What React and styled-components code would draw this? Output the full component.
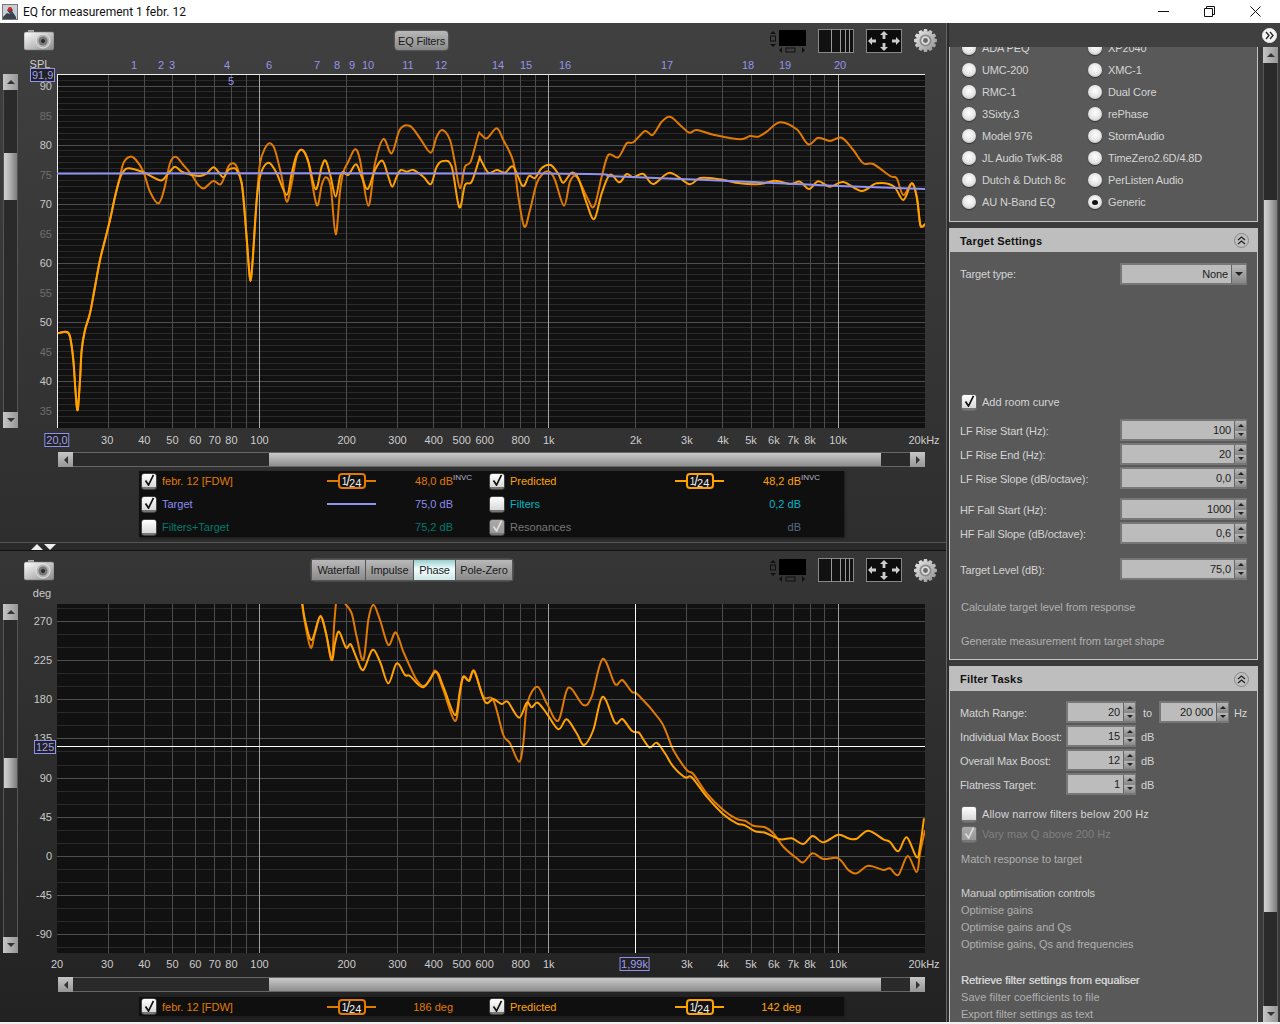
import React from 'react';
import styled, { createGlobalStyle } from 'styled-components';

const Global = createGlobalStyle`
  html, body { margin: 0; padding: 0; background: #fff; overflow: hidden; }
  #root { width: 1280px; height: 1024px; overflow: hidden; }
  * { box-sizing: border-box; }
`;

const FONT = '"Liberation Sans", Arial, sans-serif';
const fx = (f) => 57.3 + 289.3 * Math.log10(f / 20);

/* ---------- data ---------- */
const z = (ox, oy, pts) => pts.map(([x, y]) => [ox + x / 3, oy + y / 3]);
const lowCommon = [[-6,640],[0,638],[20,636],[30,650],[40,720],[47,820],[53,870],[60,780],[65,690],[75,630],[90,580],[105,500],[120,420],[135,360],[150,300],[165,230],[178,180]];
const spl1 = [
  ...z(60,120,lowCommon),
  ...z(60,120,[[190,130],[210,110],[228,120],[250,155],[270,215],[295,250],[312,210],[330,130],[347,110],[370,135],[395,165],[415,195],[432,205],[460,183],[483,192],[505,140],[518,130],[530,140],[545,190],[555,290],[565,420],[571,483],[578,420],[590,240],[600,130],[615,85],[630,70],[645,90],[665,170],[680,245],[695,190],[710,110],[727,90],[745,125],[770,255],[785,195],[797,172],[812,200],[827,343],[840,215],[850,157],[865,125],[885,88],[900,120],[925,257],[945,130],[970,57],[995,100],[1020,28],[1050,18],[1080,55],[1112,98],[1130,50],[1147,30],[1170,60],[1185,130],[1200,205],[1215,140],[1232,125],[1255,45]]),
  ...z(480,100,[[0,100],[20,115],[50,85],[70,120],[100,185],[115,290],[133,380],[150,330],[170,250],[190,220],[208,215],[225,240],[252,317],[270,245],[290,230],[320,290],[342,320],[365,230],[385,165],[415,172],[440,130],[460,127],[495,93],[518,105],[545,65],[570,50],[600,75],[628,98],[650,90],[700,104],[780,118],[810,108],[835,110],[860,95],[900,67],[950,88],[985,133],[1015,113],[1050,123],[1085,113],[1120,150],[1150,190],[1180,192],[1230,228],[1250,235],[1270,285],[1295,250],[1310,290],[1320,370],[1327,380],[1335,372]]),
];
const spl2 = [
  ...z(60,120,lowCommon),
  ...z(60,120,[[190,155],[205,145],[250,157],[280,172],[305,181],[325,160],[345,140],[365,155],[395,165],[420,168],[440,160],[460,142],[475,155],[490,172],[505,150],[520,145],[530,150],[545,190],[555,290],[565,420],[571,483],[578,420],[590,240],[600,170],[615,135],[630,130],[650,160],[680,225],[695,160],[710,105],[727,90],[745,125],[767,208],[785,140],[797,122],[812,170],[827,230],[840,170],[850,155],[865,165],[888,133],[905,170],[923,207],[945,150],[967,122],[985,170],[997,200],[1010,170],[1022,150],[1040,155],[1060,150],[1090,170],[1113,192],[1130,140],[1150,123],[1175,140],[1198,262],[1215,195],[1235,185],[1258,117]]),
  ...z(480,100,[[0,175],[25,218],[50,210],[75,218],[100,200],[128,258],[147,228],[165,234],[185,204],[212,195],[235,222],[250,248],[275,218],[295,235],[320,310],[343,357],[365,280],[390,224],[418,247],[440,222],[460,232],[490,222],[520,252],[570,218],[628,253],[660,234],[720,238],[780,250],[840,252],[885,242],[930,252],[960,245],[987,267],[1015,244],[1050,260],[1090,246],[1145,273],[1190,250],[1240,258],[1270,300],[1295,250],[1310,290],[1320,370],[1327,380],[1335,372]]),
];
const target = [[57,173.5],[549,173.5],...z(480,100,[[400,229],[600,237],[800,245],[1075,258],[1335,267]])];
const ph1a = z(290,600,[[30,-20],[35,0],[45,70],[62,143],[75,100],[92,47],[108,100],[125,180],[132,80],[138,10],[145,-30]]);
const ph1b = [
  ...z(290,600,[[155,-10],[165,10],[185,40],[200,110],[220,180],[235,60],[250,14],[270,60],[295,135],[317,97],[340,155],[360,200],[380,240],[400,258],[420,240],[437,212],[460,270],[495,363],[510,280],[520,230],[537,240],[553,212],[580,290],[610,300],[640,405],[660,430],[687,485],[700,430],[712,310],[742,260],[770,310],[805,362],[835,263],[880,315],[905,290],[938,177],[975,252],[997,240],[1025,275],[1045,285]]),
  ...z(640,720,[[60,0],[80,40],[100,90],[140,150],[160,162],[200,220],[250,270],[290,297],[315,302],[340,317],[375,322],[400,340],[430,380],[470,415],[490,427],[518,400],[550,417],[595,415],[625,450],[650,460],[685,437],[730,450],[750,445],[775,465],[803,408],[830,456],[840,400],[855,330]]),
];
const ph2 = [
  ...z(290,600,[[30,-20],[35,0],[45,60],[65,120],[90,50],[108,100],[125,180],[135,130],[147,95],[168,143],[182,133],[200,175],[220,210],[247,150],[270,185],[295,250],[320,190],[345,225],[360,228],[400,262],[437,215],[460,260],[495,345],[510,270],[520,230],[537,243],[553,215],[585,305],[610,297],[635,312],[653,305],[687,353],[710,308],[725,322],[743,308],[770,340],[805,388],[830,358],[860,400],[882,435],[910,390],[938,290],[975,368],[997,357],[1025,392],[1045,397]]),
  ...z(640,720,[[0,42],[28,82],[50,68],[75,100],[100,140],[135,172],[155,172],[200,230],[250,283],[290,310],[315,316],[345,334],[375,338],[420,358],[455,355],[490,372],[518,348],[550,367],[595,344],[625,355],[650,356],[685,332],[730,358],[750,366],[775,394],[800,352],[830,412],[840,380],[852,295]]),
].sort((a, b) => a[0] - b[0]);

const spline = (p) => {
  let d = `M${p[0][0].toFixed(1)} ${p[0][1].toFixed(1)}`;
  for (let i = 0; i < p.length - 1; i++) {
    const a = p[Math.max(i - 1, 0)], b = p[i], c = p[i + 1], e = p[Math.min(i + 2, p.length - 1)];
    const c1 = [b[0] + (c[0] - a[0]) / 6, b[1] + (c[1] - a[1]) / 6];
    const c2 = [c[0] - (e[0] - b[0]) / 6, c[1] - (e[1] - b[1]) / 6];
    d += `C${c1[0].toFixed(1)} ${c1[1].toFixed(1)} ${c2[0].toFixed(1)} ${c2[1].toFixed(1)} ${c[0].toFixed(1)} ${c[1].toFixed(1)}`;
  }
  return d;
};

const gridFreqs = [];
[10, 100, 1000, 10000].forEach((m) => [1,2,3,4,5,6,7,8,9].forEach((k) => { const f = k * m; if (f > 20 && f <= 20000) gridFreqs.push(f); }));
const isDecade = (f) => f === 100 || f === 1000 || f === 10000;

const xLabels = [[30,'30'],[40,'40'],[50,'50'],[60,'60'],[70,'70'],[80,'80'],[100,'100'],[200,'200'],[300,'300'],[400,'400'],[500,'500'],[600,'600'],[800,'800'],[1000,'1k'],[2000,'2k'],[3000,'3k'],[4000,'4k'],[5000,'5k'],[6000,'6k'],[7000,'7k'],[8000,'8k'],[10000,'10k']];
const filterNums = [['1',134],['2',161],['3',172],['4',227],['6',269],['7',317],['8',337],['9',352],['10',368],['11',408],['12',441],['14',498],['15',526],['16',565],['17',667],['18',748],['19',785],['20',840]];

/* ---------- shell ---------- */
const Page = styled.div`
  width: 1280px; height: 1024px; display: flex; flex-direction: column;
  font-family: ${FONT}; font-size: 11px; color: #ccc; background: #fff;
`;
const TitleBar = styled.div`
  height: 23px; flex: none; background: #fff; display: flex; align-items: center; padding: 0 2px;
`;
const TitleText = styled.div`
  font-family: Roboto, "Open Sans", sans-serif; font-size: 12px; color: #111; margin-left: 5px; flex: 1;
`;
const WinBtn = styled.div`
  width: 46px; height: 23px; display: flex; align-items: center; justify-content: center;
`;
const Main = styled.div`
  flex: none; height: 999px; display: flex; background: #333;
`;
const LeftPane = styled.div`
  width: 946px; flex: none; display: flex; flex-direction: column;
`;
const ChartPanel = styled.div`
  height: ${(p) => p.$h}px; flex: none; display: flex; flex-direction: column;
  background: linear-gradient(${(p) => p.$from}, ${(p) => p.$to});
`;
const Splitter = styled.div`
  height: 9px; flex: none; background: #2a2a2a; border-top: 1px solid #555; border-bottom: 1px solid #111;
  display: flex; align-items: center; padding-left: 31px; gap: 1px;
`;
const Tri = styled.div`
  width: 0; height: 0; border-left: 6px solid transparent; border-right: 6px solid transparent;
  ${(p) => (p.$up ? 'border-bottom: 6px solid #eee;' : 'border-top: 6px solid #eee;')}
`;
const BottomEdge = styled.div`
  height: 2px; flex: none; background: #f0f0f0;
`;

/* ---------- toolbar ---------- */
const Toolbar = styled.div`
  height: ${(p) => p.$h}px; flex: none; display: flex; align-items: center; padding: 0 9px 0 24px;
`;
const CenterTools = styled.div`
  margin-left: ${(p) => p.$left}px; display: flex;
`;
const ToolBtn = styled.div`
  width: 55px; height: 21px; border-radius: 4px; border: 1px solid #555; letter-spacing: -.2px;
  background: linear-gradient(#b8b8b8, #8a8a8a); color: #1a1a1a; font-size: 11px;
  display: flex; align-items: center; justify-content: center; box-shadow: 0 0 0 1px #444;
`;
const TabGroup = styled.div`
  display: flex; height: 22px; border-radius: 4px; box-shadow: 0 0 0 1px #4a4a4a; letter-spacing: -.1px;
`;
const Tab = styled.div`
  width: ${(p) => p.$w}px; display: flex; align-items: center; justify-content: center; font-size: 11px;
  color: #1a1a1a; border: 1px solid #555; border-left-width: ${(p) => (p.$first ? 1 : 0)}px;
  background: ${(p) => (p.$active ? 'linear-gradient(#9cc, #f2ffff 45%, #cfe6e6)' : 'linear-gradient(#b8b8b8, #8a8a8a)')};
`;
const RightTools = styled.div`
  margin-left: auto; display: flex; align-items: center; gap: 12px;
`;

/* ---------- strips, plot ---------- */
const Strip = styled.div`
  height: ${(p) => p.$h}px; flex: none; position: relative;
`;
const Mark = styled.span`
  position: absolute; top: ${(p) => p.$top}px; transform: translateX(-50%);
  font-size: 11px; line-height: 13px; color: ${(p) => p.$color || '#ccc'}; white-space: nowrap;
`;
const ValueBox = styled.span`
  position: absolute; top: ${(p) => p.$top}px; height: 14px; padding: 0 1px; z-index: 3;
  border: 1px solid #9090f0; background: #222; color: #a0a0f0; font-size: 11px; line-height: 12px;
  white-space: nowrap; transform: translateX(${(p) => (p.$center ? '-50%' : '0')});
`;
const PlotRow = styled.div`
  height: ${(p) => p.$h}px; flex: none; display: flex; padding-left: 3px;
`;
const VScroll = styled.div`
  width: 15px; flex: none; display: flex; flex-direction: column;
`;
const VSeg = styled.div`
  ${(p) => (p.$h ? `height: ${p.$h}px; flex: none;` : 'flex: 1;')}
  background: ${(p) => (p.$thumb ? 'linear-gradient(90deg, #d0d0d0, #c0c0c0 30%, #7c7c7c)' : '#2a2a2a')};
  border-left: 1px solid #555; border-right: 1px solid #555;
`;
const SArrow = styled.div`
  flex: none; background: linear-gradient(${(p) => (p.$h ? '#c6c6c6, #969696' : '90deg, #c6c6c6, #969696')});
  ${(p) => (p.$h ? 'width: 15px; height: 15px;' : 'width: 15px; height: 16px;')}
  display: flex; align-items: center; justify-content: center;
`;
const Caret = styled.div`
  width: 0; height: 0;
  ${(p) => p.$dir === 'up' && 'border-left: 4px solid transparent; border-right: 4px solid transparent; border-bottom: 4px solid #333;'}
  ${(p) => p.$dir === 'down' && 'border-left: 4px solid transparent; border-right: 4px solid transparent; border-top: 4px solid #333;'}
  ${(p) => p.$dir === 'left' && 'border-top: 4px solid transparent; border-bottom: 4px solid transparent; border-right: 4px solid #333;'}
  ${(p) => p.$dir === 'right' && 'border-top: 4px solid transparent; border-bottom: 4px solid transparent; border-left: 4px solid #333;'}
`;
const YAxis = styled.div`
  width: 39px; flex: none; position: relative;
`;
const YLabel = styled.span`
  position: absolute; right: 5px; transform: translateY(-50%); font-size: 11px; line-height: 13px;
  color: ${(p) => (p.$dim ? '#6e6e6e' : '#c8c8c8')};
`;
const PlotSvg = styled.svg`
  display: block; flex: none; background: #111;
`;
const HScrollRow = styled.div`
  height: 15px; flex: none; margin: ${(p) => p.$top}px 0 0 58px; width: 867px; display: flex;
`;
const HSeg = styled.div`
  ${(p) => (p.$w ? `width: ${p.$w}px; flex: none;` : 'flex: 1;')}
  background: ${(p) => (p.$thumb ? 'linear-gradient(#cacaca, #8e8e8e)' : '#2a2a2a')};
  border-top: 1px solid #666; border-bottom: 1px solid #666;
`;

/* ---------- legend ---------- */
const Legend = styled.div`
  margin: ${(p) => p.$top}px 0 0 139px; width: 705px; background: #0f0f0f; padding-left: 3px; flex: none;
  display: grid; grid-template-rows: ${(p) => p.$rows}; align-items: center;
  grid-template-columns: 20px 165px 49px 77px 37px 20px 165px 49px 77px 1fr;
  box-shadow: 1px 1px 2px #1a1a1a;
`;
const CheckBox = styled.div`
  width: 14px; height: 15px; border-radius: 2px; flex: none; display: flex; align-items: center; justify-content: center;
  background: ${(p) => (p.$off ? 'linear-gradient(#aaa, #999)' : 'linear-gradient(#fff, #d8d8d8)')};
  border-bottom: 2px solid #777;
  box-shadow: 0 0 0 .5px #777;
`;
const LegendLabel = styled.div`
  color: ${(p) => p.$c}; font-size: 11px; white-space: nowrap;
`;
const LegendValue = styled.div`
  color: ${(p) => p.$c}; font-size: 11px; text-align: right; white-space: nowrap;
`;
const Sup = styled.div`
  color: #b4b4cc; font-size: 8px; align-self: start; margin-top: 2px; white-space: nowrap;
`;
const LineSample = styled.div`
  height: 2px; background: ${(p) => p.$c};
`;
const RatioWrap = styled.div`
  position: relative; height: 16px; display: flex; align-items: center; justify-content: center;
  &::before { content: ''; position: absolute; left: 0; right: 0; top: 7px; height: 2px; background: ${(p) => p.$c}; }
`;
const RatioBox = styled.div`
  position: relative; width: 28px; height: 16px; border: 2px solid ${(p) => p.$c}; border-radius: 4px; background: #111;
  color: #eee; display: flex; align-items: baseline; justify-content: center; line-height: 12px; overflow: hidden;
`;
const RatioNum = styled.span`
  font-size: ${(p) => p.$s}px; position: relative; top: ${(p) => p.$top}px;
`;
const RatioSlash = styled.span`
  font-size: 14px; font-weight: 300; margin: 0 -1px;
`;

/* ---------- right pane ---------- */
const Divider = styled.div`
  width: 3px; flex: none; background: #2c2c2c; border-left: 1px solid #666;
`;
const RightPane = styled.div`
  flex: 1; display: flex; flex-direction: column; background: #3a3a3a; letter-spacing: -.12px;
`;
const RightTop = styled.div`
  height: 24px; flex: none; background: #404040; display: flex; align-items: center; justify-content: flex-end; padding-right: 3px;
`;
const RoundBtn = styled.div`
  width: 15px; height: 15px; border-radius: 50%; display: flex; align-items: center; justify-content: center;
  background: ${(p) => (p.$light ? '#f4f4f4' : 'transparent')}; border: 1px solid ${(p) => (p.$light ? '#eee' : '#888')};
`;
const RightBody = styled.div`
  flex: 1; display: flex; min-height: 0;
`;
const Column = styled.div`
  width: 309px; flex: none; display: flex; flex-direction: column;
`;
const RadioPanel = styled.div`
  height: 175px; flex: none; overflow: hidden; background: #595959; border: 1px solid #c4c4c4; border-top: 0;
`;
const RadioGrid = styled.div`
  margin-top: -10px; padding-left: 12px; display: grid; grid-template-columns: 126px 1fr; grid-auto-rows: 22px;
`;
const RadioItem = styled.div`
  display: flex; align-items: center; gap: 6px; color: #d4d4d4; font-size: 11px; white-space: nowrap;
`;
const RadioDot = styled.div`
  width: 14px; height: 14px; border-radius: 50%; flex: none; display: flex; align-items: center; justify-content: center;
  background: radial-gradient(circle at 50% 40%, #fff, #e4e4e4 55%, #aaa);
  box-shadow: 0 1px 1px #333;
  &::after { content: ''; width: 6px; height: 5px; border-radius: 50%; background: ${(p) => (p.$on ? '#111' : 'transparent')}; }
`;
const SectionHead = styled.div`
  height: ${(p) => p.$h}px; margin-top: 6px; flex: none; background: #bebebe; color: #111; font-weight: bold; font-size: 11px;
  display: flex; align-items: center; justify-content: space-between; padding: 1px 9px 0 11px; letter-spacing: .2px;
`;
const SectionBody = styled.div`
  flex: ${(p) => (p.$h ? 'none' : '1')}; ${(p) => p.$h && `height: ${p.$h}px;`}
  background: #595959; border: 1px solid #c4c4c4; border-top: 0; ${(p) => !p.$h && 'border-bottom: 0;'}
  padding: ${(p) => p.$top}px 0 0 10px; overflow: hidden;
`;
const Row = styled.div`
  height: ${(p) => p.$h || 24}px; margin-top: ${(p) => p.$mt || 0}px; display: flex; align-items: flex-start;
`;
const RowLabel = styled.div`
  width: ${(p) => p.$w}px; flex: none; color: #d4d4d4; font-size: 11px; line-height: ${(p) => p.$lh || 24}px; white-space: nowrap;
`;
const Field = styled.div`
  width: ${(p) => p.$w}px; height: 22px; flex: none; display: flex; border: 2px solid #777; border-right-width: 1px; background: #bcbcbc;
`;
const FieldValue = styled.div`
  flex: 1; text-align: right; padding-right: 3px; color: #1c1c1c; font-size: 11px; line-height: 19px;
`;
const Spin = styled.div`
  width: ${(p) => p.$w || 12}px; flex: none; display: flex; flex-direction: column; background: #8a8a8a; gap: 1px; border-left: 1px solid #666;
`;
const SpinPart = styled.div`
  flex: 1; background: linear-gradient(#b8b8b8, #888); display: flex; align-items: center; justify-content: center;
`;
const Tiny = styled.div`
  width: 0; height: 0; border-left: ${(p) => p.$s || 3}px solid transparent; border-right: ${(p) => p.$s || 3}px solid transparent;
  ${(p) => (p.$up ? `border-bottom: ${p.$s || 3}px solid #222;` : `border-top: ${p.$s || 3}px solid #222;`)}
`;
const Unit = styled.div`
  color: #d4d4d4; font-size: 11px; line-height: 24px; margin-left: ${(p) => p.$ml || 5}px;
  ${(p) => p.$w && `width: ${p.$w}px; flex: none;`}
`;
const CheckRow = styled.div`
  height: 20px; margin-top: ${(p) => p.$mt || 0}px; display: flex; align-items: center; gap: 6px; padding-left: 2px;
  color: ${(p) => p.$c || '#d4d4d4'}; font-size: 11px; letter-spacing: ${(p) => p.$ls || 0}px;
`;
const Action = styled.div`
  height: ${(p) => p.$h || 17}px; margin-top: ${(p) => p.$mt || 0}px; line-height: ${(p) => p.$h || 17}px; padding-left: 1px;
  color: ${(p) => p.$c || '#b0b0b0'}; font-size: 11px; white-space: nowrap; letter-spacing: ${(p) => p.$ls ?? -0.05}px;
  ${(p) => p.$ghost && 'text-shadow: .4px 0 0 #bbb;'}
`;
const VBar = styled.div`
  width: 15px; flex: none; margin: 0 2px 0 5px; display: flex; flex-direction: column; height: 975px;
`;

/* ---------- drawings ---------- */
const Camera = () => (
  <svg width="30" height="21" viewBox="0 0 30 21">
    <defs>
      <linearGradient id="cam" x1="0" y1="0" x2="1" y2="1"><stop offset="0" stopColor="#fff" /><stop offset="1" stopColor="#8a8a8a" /></linearGradient>
    </defs>
    <rect x="4" y="0" width="6" height="3" fill="#aaa" />
    <rect x="0" y="2" width="30" height="18" rx="2" fill="url(#cam)" stroke="#777" strokeWidth=".6" />
    <circle cx="19" cy="11" r="7" fill="#b5b5b5" stroke="#eee" strokeWidth=".8" />
    <circle cx="19" cy="11" r="4.5" fill="#777" />
    <circle cx="19" cy="11" r="2" fill="#2a2a2a" />
  </svg>
);
const AspectIcon = () => (
  <svg width="37" height="24" viewBox="0 0 37 24">
    <rect x="10" y="1" width="27" height="16" fill="#000" />
    <path d="M1 5l3-3 3 3zM1 15l3 3 3-3z" fill="#111" />
    <rect x="1.5" y="7" width="5" height="5" fill="none" stroke="#111" strokeWidth="1" />
    <path d="M10 21l3-3v6zM36 21l-3-3v6z" fill="#111" />
    <rect x="17" y="19" width="9" height="4" fill="none" stroke="#111" strokeWidth="1" />
  </svg>
);
const GridIcon = () => (
  <svg width="36" height="24" viewBox="0 0 36 24">
    <rect x=".5" y=".5" width="35" height="23" fill="#111" stroke="#888" />
    {[13.5, 22.5, 27.5, 31.5].map((x) => <line key={x} x1={x} x2={x} y1="0" y2="24" stroke="#999" />)}
  </svg>
);
const MoveIcon = () => (
  <svg width="36" height="24" viewBox="0 0 36 24">
    <rect x=".5" y=".5" width="35" height="23" fill="#0c0c0c" stroke="#888" />
    <g fill="#ccc">
      <path d="M18 2l4 4h-2.6v4h-2.8v-4H14z" />
      <path d="M18 22l4-4h-2.6v-4h-2.8v4H14z" />
      <path d="M2 12l4-4v2.6h4v2.8H6V16z" />
      <path d="M34 12l-4-4v2.6h-4v2.8h4V16z" />
    </g>
  </svg>
);
const gearPath = (() => {
  const n = 12, c = 11.5; let d = '';
  for (let i = 0; i < n; i++) {
    const a = (i / n) * Math.PI * 2, w = Math.PI / n;
    const pts = [[a - w * .95, 9], [a - w * .5, 11.5], [a + w * .5, 11.5], [a + w * .95, 9]];
    pts.forEach(([t, r], j) => { d += `${i === 0 && j === 0 ? 'M' : 'L'}${(c + r * Math.cos(t)).toFixed(2)} ${(c + r * Math.sin(t)).toFixed(2)}`; });
  }
  return d + 'Z';
})();
const Gear = () => (
  <svg width="23" height="23" viewBox="0 0 23 23">
    <defs>
      <linearGradient id="gear" x1="0" y1="0" x2="1" y2="1"><stop offset="0" stopColor="#f0f0f0" /><stop offset="1" stopColor="#8c8c8c" /></linearGradient>
    </defs>
    <path d={gearPath} fill="url(#gear)" />
    <circle cx="11.5" cy="11.5" r="6" fill="#8a8a8a" />
    <circle cx="11.5" cy="11.5" r="4.2" fill="#ddd" />
    <circle cx="11.5" cy="11.5" r="2.4" fill="#666" />
  </svg>
);
const Tick = ({ off }) => (
  <svg width="11" height="12" viewBox="0 0 11 12">
    <path d="M1.5 6.5 4.5 11 9.5 .8" fill="none" stroke={off ? '#ddd' : '#111'} strokeWidth="1.7" />
  </svg>
);
const Check = ({ on, off }) => <CheckBox $off={off}>{on && <Tick off={off} />}</CheckBox>;
const Chevrons = ({ dir, color }) => (
  <svg width="9" height="9" viewBox="0 0 9 9">
    <path d={dir === 'up' ? 'M1 4 4.5 1 8 4M1 8 4.5 5 8 8' : 'M1 1 4 4.5 1 8M5 1 8 4.5 5 8'} fill="none" stroke={color} strokeWidth="1.3" />
  </svg>
);
const AppIcon = () => (
  <svg width="16" height="16" viewBox="0 0 16 16">
    <rect x=".5" y=".5" width="15" height="15" fill="#c9cdd6" stroke="#777" />
    <path d="M1 13 5 9l3 1 2-3 4 6v2H1z" fill="#39424f" />
    <path d="M5 6 8 3l3 3-3 4z" fill="#3a3f4a" />
    <circle cx="8" cy="5" r="2" fill="#d22" />
  </svg>
);

/* ---------- composites ---------- */
const PlotGrid = ({ x0, y0, w, h, hLines, stroke, edged }) => (
  <>
    {hLines.map(([y, major]) => (
      <line key={y} x1={x0} x2={x0 + w} y1={y} y2={y} stroke={major ? '#4e4e4e' : '#2a2a2a'} />
    ))}
    {gridFreqs.map((f) => (
      <line key={f} x1={Math.floor(fx(f)) + .5} x2={Math.floor(fx(f)) + .5} y1={y0} y2={y0 + h} stroke={isDecade(f) ? stroke : '#4c4c4c'} />
    ))}
    {edged && (
      <>
        <line x1={x0} x2={x0 + w} y1={y0 + .5} y2={y0 + .5} stroke="#eee" />
        <line x1={x0 + .5} x2={x0 + .5} y1={y0} y2={y0 + h} stroke="#eee" />
      </>
    )}
  </>
);

const VScrollBar = ({ before, thumb }) => (
  <VScroll>
    <SArrow><Caret $dir="up" /></SArrow>
    <VSeg $h={before} />
    <VSeg $h={thumb} $thumb />
    <VSeg />
    <SArrow><Caret $dir="down" /></SArrow>
  </VScroll>
);
const HScroll = ({ top }) => (
  <HScrollRow $top={top}>
    <SArrow $h><Caret $dir="left" /></SArrow>
    <HSeg $w={196} />
    <HSeg $w={612} $thumb />
    <HSeg />
    <SArrow $h><Caret $dir="right" /></SArrow>
  </HScrollRow>
);
const Ratio = ({ c }) => (
  <RatioWrap $c={c}>
    <RatioBox $c={c}>
      <RatioNum $s={10} $top={-1}>1</RatioNum><RatioSlash>/</RatioSlash><RatioNum $s={11} $top={1}>24</RatioNum>
    </RatioBox>
  </RatioWrap>
);
const ViewTools = () => (
  <RightTools>
    <AspectIcon /><GridIcon /><MoveIcon /><Gear />
  </RightTools>
);
const Spinner = () => (
  <Spin>
    <SpinPart><Tiny $up /></SpinPart>
    <SpinPart><Tiny /></SpinPart>
  </Spin>
);
const NumField = ({ w, v }) => (
  <Field $w={w}><FieldValue>{v}</FieldValue><Spinner /></Field>
);
const Arrowed = ({ children, w, v, mt, lw = 160 }) => (
  <Row $mt={mt}><RowLabel $w={lw}>{children}</RowLabel><NumField w={w} v={v} /></Row>
);
const ScrollArrow = ({ dir }) => <SArrow><Caret $dir={dir} /></SArrow>;

const radios = [
  ['ADA PEQ', 'XP2040'], ['UMC-200', 'XMC-1'], ['RMC-1', 'Dual Core'], ['3Sixty.3', 'rePhase'],
  ['Model 976', 'StormAudio'], ['JL Audio TwK-88', 'TimeZero2.6D/4.8D'], ['Dutch & Dutch 8c', 'PerListen Audio'], ['AU N-Band EQ', 'Generic'],
];

const splY = [90,85,80,75,70,65,60,55,50,45,40,35];
const phY = [270,225,180,135,90,45,0,-45,-90];
const splLines = [];
for (let d = 30; d <= 92; d++) splLines.push([Math.round(174 - (d - 75) * 5.9) + .5, d % 10 === 0]);
const phLines = [];
for (let d = -105; d <= 285; d += 15) phLines.push([Math.round(856 - d * .8711) + .5, d % 45 === 0]);

export default function App() {
  return (
    <Page>
      <Global />
      <TitleBar>
        <AppIcon />
        <TitleText>EQ for measurement 1 febr. 12</TitleText>
        <WinBtn><svg width="11" height="11" viewBox="0 0 11 11"><line x1="0" x2="11" y1="5.5" y2="5.5" stroke="#111" /></svg></WinBtn>
        <WinBtn><svg width="11" height="11" viewBox="0 0 11 11"><path d="M.5 2.5h8v8h-8zM2.5 2.5v-2h8v8h-2" fill="none" stroke="#111" /></svg></WinBtn>
        <WinBtn><svg width="11" height="11" viewBox="0 0 11 11"><path d="M.5.5l10 10M10.5.5l-10 10" stroke="#111" /></svg></WinBtn>
      </TitleBar>
      <Main>
        <LeftPane>
          <ChartPanel $h={519} $from="#404040" $to="#2e2e2e">
            <Toolbar $h={35}>
              <Camera />
              <CenterTools $left={340}><ToolBtn>EQ Filters</ToolBtn></CenterTools>
              <ViewTools />
            </Toolbar>
            <Strip $h={16}>
              <Mark $top={0} style={{ left: 40 }}>SPL</Mark>
              <ValueBox $top={10} style={{ left: 30 }}>91,9</ValueBox>
              {filterNums.map(([n, x]) => <Mark key={n} $top={1} $color="#9494ea" style={{ left: x }}>{n}</Mark>)}
              <Mark $top={17} $color="#9494ea" style={{ left: 231, zIndex: 2 }}>5</Mark>
            </Strip>
            <PlotRow $h={354}>
              <VScrollBar before={63} thumb={47} />
              <YAxis>
                {splY.map((d) => (
                  <YLabel key={d} $dim={d % 10 !== 0} style={{ top: 174 - (d - 75) * 5.9 - 74 + .5 }}>{d}</YLabel>
                ))}
              </YAxis>
              <PlotSvg width="868" height="354" viewBox="57 74 868 354">
                <PlotGrid edged x0={57} y0={74} w={868} h={354} hLines={splLines} stroke="#a8a8a8" />
                <path d={spline(spl1)} fill="none" stroke="#e07a00" strokeWidth="2" />
                <path d={spline(spl2)} fill="none" stroke="#ffa200" strokeWidth="2" />
                <path d={spline(target)} fill="none" stroke="#9292f0" strokeWidth="2" />
              </PlotSvg>
            </PlotRow>
            <Strip $h={24}>
              <ValueBox $top={5} $center style={{ left: 57 }}>20,0</ValueBox>
              {xLabels.map(([f, t]) => <Mark key={f} $top={6} style={{ left: fx(f) - (f === 30 ? 1 : 0) }}>{t}</Mark>)}
              <Mark $top={6} style={{ left: 924 }}>20kHz</Mark>
            </Strip>
            <HScroll top={0} />
            <Legend $top={4} $rows="20px 26px 20px">
              <Check on /><LegendLabel $c="#e07a00">febr. 12 [FDW]</LegendLabel><Ratio c="#e07a00" />
              <LegendValue $c="#e07a00">48,0 dB</LegendValue><Sup>INVC</Sup>
              <Check on /><LegendLabel $c="#ffa200">Predicted</LegendLabel><Ratio c="#ffa200" />
              <LegendValue $c="#ffa200">48,2 dB</LegendValue><Sup>INVC</Sup>

              <Check on /><LegendLabel $c="#8c8cf0">Target</LegendLabel><LineSample $c="#9292f0" />
              <LegendValue $c="#8c8cf0">75,0 dB</LegendValue><div />
              <Check /><LegendLabel $c="#00b4c4">Filters</LegendLabel><div />
              <LegendValue $c="#00b4c4">0,2 dB</LegendValue><div />

              <Check /><LegendLabel $c="#007a70">Filters+Target</LegendLabel><div />
              <LegendValue $c="#007a70">75,2 dB</LegendValue><div />
              <Check on off /><LegendLabel $c="#777">Resonances</LegendLabel><div />
              <LegendValue $c="#5a6a80">dB</LegendValue><div />
            </Legend>
          </ChartPanel>
          <Splitter><Tri $up /><Tri /></Splitter>
          <ChartPanel $h={471} $from="#363636" $to="#222">
            <Toolbar $h={38}>
              <Camera />
              <CenterTools $left={257}>
                <TabGroup>
                  <Tab $w={55} $first>Waterfall</Tab>
                  <Tab $w={48}>Impulse</Tab>
                  <Tab $w={42} $active>Phase</Tab>
                  <Tab $w={57}>Pole-Zero</Tab>
                </TabGroup>
              </CenterTools>
              <ViewTools />
            </Toolbar>
            <Strip $h={15}>
              <Mark $top={-2} style={{ left: 42 }}>deg</Mark>
            </Strip>
            <PlotRow $h={349}>
              <VScrollBar before={138} thumb={30} />
              <YAxis>
                {phY.map((d) => (
                  <YLabel key={d} style={{ top: 856 - d * .8711 - 604 }}>{d}</YLabel>
                ))}
                <ValueBox $top={136} style={{ left: 16 }}>125</ValueBox>
              </YAxis>
              <PlotSvg width="868" height="349" viewBox="57 604 868 349">
                <PlotGrid x0={57} y0={604} w={868} h={349} hLines={phLines} stroke="#a0a0a0" />
                <path d={spline(ph1a)} fill="none" stroke="#e07a00" strokeWidth="2" />
                <path d={spline(ph1b)} fill="none" stroke="#e07a00" strokeWidth="2" />
                <path d={spline(ph2)} fill="none" stroke="#ffa200" strokeWidth="2" />
                <line x1="57" x2="925" y1="746.5" y2="746.5" stroke="#fff" />
                <line x1="635.5" x2="635.5" y1="604" y2="953" stroke="#fff" />
              </PlotSvg>
            </PlotRow>
            <Strip $h={24}>
              <Mark $top={5} style={{ left: 57 }}>20</Mark>
              {xLabels.filter(([f]) => f !== 2000).map(([f, t]) => <Mark key={f} $top={5} style={{ left: fx(f) - (f === 30 ? 1 : 0) }}>{t}</Mark>)}
              <Mark $top={5} style={{ left: 924 }}>20kHz</Mark>
              <ValueBox $top={4} $center style={{ left: 634.5 }}>1,99k</ValueBox>
            </Strip>
            <HScroll top={0} />
            <Legend $top={5} $rows="19px">
              <Check on /><LegendLabel $c="#e07a00">febr. 12 [FDW]</LegendLabel><Ratio c="#e07a00" />
              <LegendValue $c="#e07a00">186 deg</LegendValue><div />
              <Check on /><LegendLabel $c="#ffa200">Predicted</LegendLabel><Ratio c="#ffa200" />
              <LegendValue $c="#ffa200">142 deg</LegendValue><div />
            </Legend>
          </ChartPanel>
        </LeftPane>
        <Divider />
        <RightPane>
          <RightTop>
            <RoundBtn $light><Chevrons color="#222" /></RoundBtn>
          </RightTop>
          <RightBody>
            <Column>
              <RadioPanel>
                <RadioGrid>
                  {radios.flat().map((r) => (
                    <RadioItem key={r}><RadioDot $on={r === 'Generic'} />{r}</RadioItem>
                  ))}
                </RadioGrid>
              </RadioPanel>
              <SectionHead $h={24}>Target Settings<RoundBtn><Chevrons dir="up" color="#222" /></RoundBtn></SectionHead>
              <SectionBody $h={408} $top={11}>
                <Row $h={22}>
                  <RowLabel $w={160} $lh={22}>Target type:</RowLabel>
                  <Field $w={127}><FieldValue>None</FieldValue><Spin $w={15}><SpinPart><Tiny $s={4} /></SpinPart></Spin></Field>
                </Row>
                <CheckRow $mt={107}><Check on />Add room curve</CheckRow>
                <Arrowed mt={7} w={127} v="100">LF Rise Start (Hz):</Arrowed>
                <Arrowed w={127} v="20">LF Rise End (Hz):</Arrowed>
                <Arrowed w={127} v="0,0">LF Rise Slope (dB/octave):</Arrowed>
                <Arrowed mt={7} w={127} v="1000">HF Fall Start (Hz):</Arrowed>
                <Arrowed w={127} v="0,6">HF Fall Slope (dB/octave):</Arrowed>
                <Arrowed mt={12} w={127} v="75,0">Target Level (dB):</Arrowed>
                <Action $mt={17} $h={16}>Calculate target level from response</Action>
                <Action $mt={18} $h={16}>Generate measurement from target shape</Action>
              </SectionBody>
              <SectionHead $h={25}>Filter Tasks<RoundBtn><Chevrons dir="up" color="#222" /></RoundBtn></SectionHead>
              <SectionBody $top={10}>
                <Row>
                  <RowLabel $w={106}>Match Range:</RowLabel><NumField w={70} v="20" />
                  <Unit $ml={7} $w={16}>to</Unit><NumField w={70} v="20 000" /><Unit>Hz</Unit>
                </Row>
                <Row><RowLabel $w={106}>Individual Max Boost:</RowLabel><NumField w={70} v="15" /><Unit>dB</Unit></Row>
                <Row><RowLabel $w={106}>Overall Max Boost:</RowLabel><NumField w={70} v="12" /><Unit>dB</Unit></Row>
                <Row><RowLabel $w={106}>Flatness Target:</RowLabel><NumField w={70} v="1" /><Unit>dB</Unit></Row>
                <CheckRow $mt={7} $ls={.15}><Check />Allow narrow filters below 200 Hz</CheckRow>
                <CheckRow $c="#808080" $ls={.02}><Check on off />Vary max Q above 200 Hz</CheckRow>
                <Action $mt={7} $h={16} $ls={-0.03}>Match response to target</Action>
                <Action $mt={18} $c="#d0d0d0" $ls={-0.2}>Manual optimisation controls</Action>
                <Action>Optimise gains</Action>
                <Action>Optimise gains and Qs</Action>
                <Action>Optimise gains, Qs and frequencies</Action>
                <Action $mt={19} $c="#d8d8d8" $ghost $ls={0}>Retrieve filter settings from equaliser</Action>
                <Action $ls={.08}>Save filter coefficients to file</Action>
                <Action $ls={0}>Export filter settings as text</Action>
              </SectionBody>
            </Column>
            <VBar>
              <ScrollArrow dir="up" />
              <VSeg $h={137} />
              <VSeg $h={712} $thumb />
              <VSeg />
              <ScrollArrow dir="down" />
            </VBar>
          </RightBody>
        </RightPane>
      </Main>
      <BottomEdge />
    </Page>
  );
}
